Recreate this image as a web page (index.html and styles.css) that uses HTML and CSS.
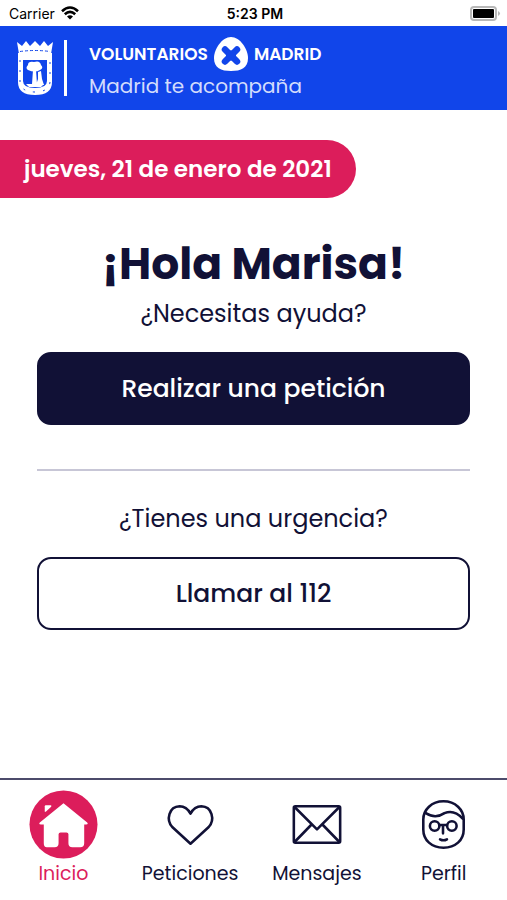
FILE: index.html
```html
<!DOCTYPE html>
<html lang="es">
  <head>
    <meta charset="utf-8" />
    <meta name="viewport" content="width=device-width, initial-scale=1.0" />
    <title>Voluntarios por Madrid</title>
    <link rel="stylesheet" href="styles.css">
  </head>
  <body>
    <div class="status-bar">
      <div class="carrier">
        <span>Carrier</span>
        <svg class="wifi" viewBox="0 0 18 14" aria-hidden="true">
          <path d="M1 5.200Q9-2.200 17 5.200" fill="none" stroke="#000" stroke-width="2.600" />
          <path d="M3.800 8.200Q9 3.400 14.200 8.200" fill="none" stroke="#000" stroke-width="2.600" />
          <path d="M6 10.600Q9 8 12 10.600L9 13.600Z" fill="#000" />
        </svg>
      </div>
      <span class="time">5:23 PM</span>
      <svg class="battery" viewBox="0 0 31 15" aria-hidden="true">
        <rect x="1" y="1" width="25" height="13" rx="3" fill="#fff" stroke="#b8b8b8" stroke-width="2" />
        <rect x="3" y="3" width="21" height="9" rx="1" fill="#000" />
        <path d="M28 5Q32 7.500 28 10Z" fill="#b8b8b8" />
      </svg>
    </div>

    <header class="header">
      <!-- escudo de Madrid -->
      <svg class="shield" viewBox="0 0 38 56" aria-hidden="true">
        <path d="M3 14L1 2L6 6L10 1L14 6L19 1L24 6L28 1L32 6L37 2L35 14Z" fill="#fff" />
        <path d="M4 11.500Q19 9.500 34 11.500" fill="none" stroke="#1145ea" stroke-width="1" stroke-dasharray="3 2" />
        <path d="M2 13H36V42Q36 55 19 55Q2 55 2 42Z" fill="#fff" />
        <path d="M7 20H31V41Q31 48 19 48Q7 48 7 41Z" fill="#1145ea" />
        <path d="M4 20V42Q5 52 19 52Q33 52 34 42V20" fill="none" stroke="#1145ea" stroke-width="1" stroke-dasharray="2 8" />
        <path d="M12 30Q9 28 12 25Q12 21 18 22Q24 20 25 25Q28 28 24 30Q19 33 12 30Z" fill="#fff" />
        <path d="M17 30H20L21 44H16ZM22 32L25 31L26 39L28 45H20L22 39Z" fill="#fff" />
        <path d="M10 44H28L25 47H13Z" fill="#fff" />
      </svg>
      <div class="brand">
        <div class="brand-name">
          <span>VOLUNTARIOS</span>
          <svg class="brand-mark" viewBox="0 0 36 36" aria-hidden="true">
            <path d="M18 1C27 1 35 13 35 22C35 32 28 35 18 35C8 35 1 32 1 22C1 13 9 1 18 1Z" fill="#fff" />
            <path d="M12 13.500L24 25.500M24 13.500L12 25.500" stroke="#1145ea" stroke-width="6.500" stroke-linecap="round" />
            <rect x="13" y="14.500" width="10" height="10" rx="2" fill="#1145ea" />
          </svg>
          <span>MADRID</span>
        </div>
        <div class="brand-slogan">Madrid te acompaña</div>
      </div>
    </header>

    <main class="main">
      <div class="date">jueves, 21 de enero de 2021</div>

      <section class="help">
        <h1>¡Hola Marisa!</h1>
        <p class="question">¿Necesitas ayuda?</p>
        <button type="button" class="btn btn-primary">Realizar una petición</button>
      </section>

      <section class="urgency">
        <p class="question">¿Tienes una urgencia?</p>
        <button type="button" class="btn btn-outline">Llamar al 112</button>
      </section>
    </main>

    <nav class="tabs">
      <a href="#inicio" class="tab active" aria-current="page">
        <svg viewBox="0 0 70 70" aria-hidden="true">
          <circle cx="35" cy="35" r="34.500" fill="#dc1d5b" />
          <path d="M16 22V16.500Q16 15.500 17 15.500H22Q23 15.500 22.500 17L17 22Z" fill="#fff" />
          <path d="M35 13.500L59 33Q60.500 35 58 35H56V54Q56 58 52 58H44Q40 58 40 54V45Q40 43 38 43H32Q30 43 30 45V54Q30 58 26 58H18Q15 58 15 54V35H12Q9.500 35 11 33Z" fill="#fff" />
        </svg>
        <span>Inicio</span>
      </a>
      <a href="#peticiones" class="tab">
        <svg viewBox="0 0 70 70" aria-hidden="true">
          <path d="M35 54.500L16.500 37.500C10 30 13 17 24 16.500Q31 16.500 35 24Q39 16.500 46 16.500C57 17 60 30 53.500 37.500Z" fill="none" stroke="#111136" stroke-width="2.600" stroke-linejoin="round" />
        </svg>
        <span>Peticiones</span>
      </a>
      <a href="#mensajes" class="tab">
        <svg viewBox="0 0 70 70" aria-hidden="true">
          <g fill="none" stroke="#111136" stroke-width="2.600" stroke-linejoin="round">
            <rect x="12" y="16.500" width="47" height="37" rx="1.500" />
            <path d="M13 17.500L35.500 40L58 17.500M13 52.500L30 35M58 52.500L41 35" />
          </g>
        </svg>
        <span>Mensajes</span>
      </a>
      <a href="#perfil" class="tab">
        <svg viewBox="0 0 70 70" aria-hidden="true">
          <g fill="none" stroke="#111136" stroke-width="2.600" stroke-linecap="round">
            <path d="M35 11.500C47 11.500 55.500 20 55.500 30V40C55.500 51 47 58.500 35 58.500S14.500 51 14.500 40V30C14.500 20 23 11.500 35 11.500Z" />
            <path d="M17 23.500C24 27.500 29 28 36 23.500C43 20.500 49 23 54.500 29" />
            <circle cx="26" cy="36.500" r="4.800" />
            <circle cx="43.500" cy="36.500" r="4.800" />
            <path d="M31 35.500H38.500M34.500 36V44" />
            <path d="M31.500 50Q35 52 38.500 50" />
          </g>
        </svg>
        <span>Perfil</span>
      </a>
    </nav>
  </body>
</html>
```
FILE: styles.css
```css
* {
  margin: 0;
  padding: 0;
  box-sizing: border-box;
}

body {
  display: flex;
  flex-direction: column;
  min-height: 100vh;
  font-family: "Poppins", "Inter", sans-serif;
  background-color: #fff;
  color: #111136;
}

/* barra de estado */
.status-bar {
  display: grid;
  grid-template-columns: 1fr auto 1fr;
  align-items: center;
  height: 26px;
  padding: 0 6px 0 9px;
  font-family: "Inter", sans-serif;
  font-size: 14px;
  color: #000;
}

.carrier {
  display: flex;
  align-items: center;
  gap: 6px;
}

.wifi {
  width: 18px;
  height: 14px;
}

.time {
  font-weight: 600;
}

.battery {
  justify-self: end;
  width: 31px;
  height: 15px;
}

/* cabecera */
.header {
  display: flex;
  align-items: center;
  height: 84px;
  padding: 0 16px;
  background-color: #1145ea;
  color: #fff;
}

.shield {
  width: 38px;
  height: 56px;
}

.brand {
  position: relative;
  margin-left: 35px;
}

.brand::before {
  content: "";
  position: absolute;
  top: 4px;
  bottom: 4px;
  left: -25px;
  width: 3px;
  background-color: #fff;
}

.brand-name {
  display: flex;
  align-items: center;
  gap: 5px;
  font-size: 17px;
  font-weight: 600;
  line-height: 36px;
}

.brand-mark {
  width: 36px;
  height: 36px;
}

.brand-slogan {
  font-size: 20px;
  line-height: 28px;
  color: #d3dcfc;
}

/* contenido */
.main {
  flex: 1;
  padding-top: 30px;
}

.date {
  width: fit-content;
  padding: 0 24px;
  border-radius: 0 29px 29px 0;
  background-color: #dc1d5b;
  color: #fff;
  font-size: 23px;
  font-weight: 600;
  line-height: 58px;
}

.help,
.urgency {
  margin: 0 37px;
  text-align: center;
}

.help {
  padding: 37px 0 44px;
  border-bottom: 2px solid #c7c6d6;
}

.urgency {
  padding: 27px 0;
}

h1 {
  font-size: 44px;
  font-weight: 700;
  line-height: 58px;
}

.question {
  font-size: 24px;
  line-height: 42px;
}

.btn {
  width: 100%;
  height: 73px;
  margin-top: 17px;
  border: 2px solid #111136;
  border-radius: 14px;
  font-family: inherit;
  font-size: 25px;
  font-weight: 500;
  cursor: pointer;
}

.btn-primary {
  background-color: #111136;
  color: #fff;
}

.btn-outline {
  background-color: #fff;
  color: #111136;
}

/* menú inferior */
.tabs {
  display: grid;
  grid-template-columns: repeat(4, 1fr);
  padding: 10px 0 11px;
  border-top: 2px solid #4c4b6b;
}

.tab {
  display: flex;
  flex-direction: column;
  align-items: center;
  color: #111136;
  font-size: 19px;
  line-height: 30px;
  text-decoration: none;
}

.tab svg {
  width: 69px;
  height: 69px;
}

.tab.active {
  color: #dc1d5b;
}
```
